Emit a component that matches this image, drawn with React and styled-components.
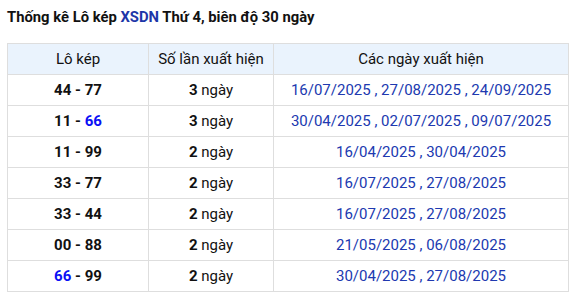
import React from "react";
import styled, { createGlobalStyle } from "styled-components";

const Global = createGlobalStyle`
  html, body { margin: 0; padding: 0; background: #fff; }
  body { font-family: Roboto, "Liberation Sans", Arial, sans-serif; color: #111; }
`;

const Page = styled.div`
  padding: 7px 7px 0 7px;
`;

const Title = styled.h2`
  margin: 0;
  font-size: 14.8px;
  line-height: 20px;
  font-weight: 700;
  color: #111;
`;

const Accent = styled.span`
  color: #1d36a8;
`;

const Table = styled.table`
  margin-top: 16px;
  width: 561px;
  border-collapse: collapse;
  font-size: 15px;
  table-layout: fixed;
`;

const Th = styled.th`
  background: #eaf3fd;
  font-weight: 400;
  height: 30px;
  border: 1px solid #dedede;
  text-align: center;
  padding: 0;
  color: #111;
`;

const Td = styled.td`
  height: 30px;
  border: 1px solid #dedede;
  text-align: center;
  padding: 0;
  color: ${(p) => (p.$dates ? "#2039b0" : "#111")};
  font-weight: ${(p) => (p.$bold ? 700 : 400)};
`;

const Hi = styled.span`
  color: ${(p) => (p.$hot ? "#0a10f5" : "inherit")};
`;

const rows = [
  ["44", "77", 3, "16/07/2025 , 27/08/2025 , 24/09/2025"],
  ["11", "66", 3, "30/04/2025 , 02/07/2025 , 09/07/2025"],
  ["11", "99", 2, "16/04/2025 , 30/04/2025"],
  ["33", "77", 2, "16/07/2025 , 27/08/2025"],
  ["33", "44", 2, "16/07/2025 , 27/08/2025"],
  ["00", "88", 2, "21/05/2025 , 06/08/2025"],
  ["66", "99", 2, "30/04/2025 , 27/08/2025"],
];

export default function App() {
  return (
    <Page>
      <Global />
      <Title>
        Thống kê Lô kép <Accent>XSDN</Accent> Thứ 4, biên độ 30 ngày
      </Title>
      <Table>
        <colgroup>
          <col style={{ width: 141 }} />
          <col style={{ width: 125 }} />
          <col style={{ width: 295 }} />
        </colgroup>
        <thead>
          <tr>
            <Th>Lô kép</Th>
            <Th>Số lần xuất hiện</Th>
            <Th>Các ngày xuất hiện</Th>
          </tr>
        </thead>
        <tbody>
          {rows.map(([a, b, n, d], i) => (
            <tr key={i}>
              <Td $bold>
                <Hi $hot={a === "66"}>{a}</Hi> - <Hi $hot={b === "66"}>{b}</Hi>
              </Td>
              <Td>
                <b>{n}</b> ngày
              </Td>
              <Td $dates>{d}</Td>
            </tr>
          ))}
        </tbody>
      </Table>
    </Page>
  );
}
